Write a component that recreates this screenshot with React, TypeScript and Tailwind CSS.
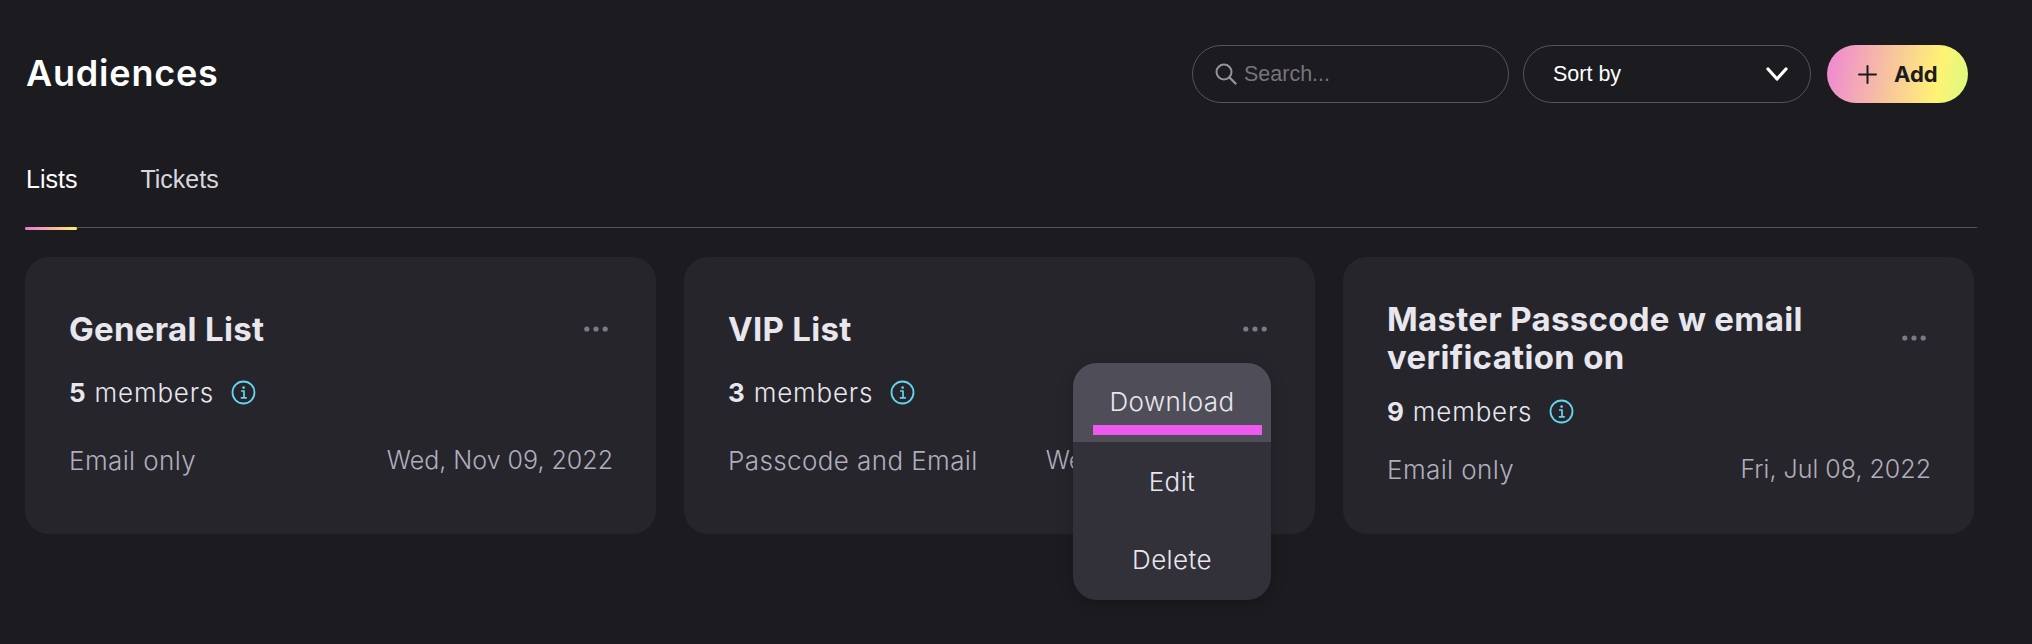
import React from "react";

const poppins = "font-['Inter','Liberation_Sans',sans-serif]";

function Dots() {
  return (
    <svg width="24" height="6" viewBox="0 0 24 6" className="shrink-0" fill="#7b7a85">
      <circle cx="2.8" cy="3" r="2.6" />
      <circle cx="12" cy="3" r="2.6" />
      <circle cx="21.2" cy="3" r="2.6" />
    </svg>
  );
}

function Info() {
  return (
    <svg width="25" height="25" viewBox="0 0 25 25" fill="none" stroke="#63d5ee" className="shrink-0">
      <circle cx="12.5" cy="12.5" r="11" strokeWidth="1.8" />
      <path d="M10 11h3v6.5M9.8 17.8h6" strokeWidth="1.7" />
      <circle cx="12.6" cy="7.6" r="1.3" fill="#63d5ee" stroke="none" />
    </svg>
  );
}

function Card({
  title,
  count,
  kind,
  date,
  menu,
}: {
  title: React.ReactNode;
  count: number;
  kind: string;
  date: string;
  menu?: boolean;
}) {
  return (
    <div className="relative h-[277px] rounded-[24px] bg-[#27252c] pl-[44px] pr-[43px] py-[26px] flex flex-col justify-evenly">
      <div className="flex items-center justify-between pr-[5px]">
        <h2 className={`${poppins} text-[33px] leading-[38px] font-bold tracking-[0.3px] text-[#e8e7ee] w-[460px]`}>{title}</h2>
        <Dots />
      </div>
      <div className={`${poppins} h-[40px] pb-[5px] flex items-center gap-[17px] text-[26px] tracking-[0.8px] font-light text-[#e8e7ee]`}>
        <span>
          <span className="font-bold">{count}</span> members
        </span>
        <Info />
      </div>
      <div className={`${poppins} h-[40px] pb-[2px] flex items-center justify-between font-light text-[#b0aebd]`}>
        <span className="text-[26px] tracking-[0.4px]">{kind}</span>
        <span className="text-[25px]">{date}</span>
      </div>
      {menu && (
        <div className={`${poppins} absolute left-[389px] top-[106px] w-[198px] h-[237px] rounded-[24px] bg-[#32313a] overflow-hidden flex flex-col text-[26px] tracking-[0.4px] font-light text-[#e8e7ee] shadow-[0_4px_16px_rgba(0,0,0,0.2)]`}>
          <div className="h-[79px] bg-[#4f4e58] flex flex-col items-center pt-[19px] relative">
            <span className="leading-[40px]">Download</span>
            <span className="absolute left-[20px] top-[62px] w-[169px] h-[10px] bg-[#ee5af0]" />
          </div>
          <div className="h-[78px] flex items-center justify-center">Edit</div>
          <div className="h-[78px] flex items-center justify-center">Delete</div>
        </div>
      )}
    </div>
  );
}

export default function App() {
  return (
    <div className="w-[2032px] h-[644px] overflow-hidden bg-[#1c1b20] pl-[25px] pt-[45px]">
      <div className="w-[1952px]">
        <header className="flex items-center justify-between h-[58px] pr-[9px]">
          <h1 className={`${poppins} text-[36px] font-semibold tracking-[0.8px] text-white pl-[1px] pb-[2px]`}>Audiences</h1>
          <div className="flex items-center">
            <label className="w-[317px] h-[58px] rounded-full border border-[#55545e] flex items-center pl-[22px] gap-[7px]">
              <svg width="22" height="22" viewBox="0 0 22 22" fill="none" stroke="#94939c" strokeWidth="2">
                <circle cx="9" cy="9" r="7.5" />
                <path d="M14.5 14.5l6 6" strokeLinecap="round" strokeWidth="2.4" />
              </svg>
              <input
                placeholder="Search..."
                className="w-[240px] bg-transparent outline-none font-['Liberation_Sans',sans-serif] text-[21.5px] placeholder:text-[#76757c]"
              />
            </label>
            <div className="ml-[14px] w-[288px] h-[58px] rounded-full border border-[#55545e] flex items-center justify-between pl-[29px] pr-[22px] font-['Liberation_Sans',sans-serif] text-[21.5px] text-white">
              <span>Sort by</span>
              <svg width="22" height="14" viewBox="0 0 22 14" fill="none" stroke="#fff" strokeWidth="3.2" strokeLinecap="round" strokeLinejoin="round">
                <path d="M2 2l9 10 9-10" />
              </svg>
            </div>
            <button className="ml-[16px] w-[141px] h-[58px] rounded-full bg-[linear-gradient(100deg,#ee86d5_0%,#fff374_78%,#d8fb80_100%)] flex items-center pl-[31px] gap-[17px]">
              <svg width="19" height="19" viewBox="0 0 19 19" stroke="#1c1b20" strokeWidth="2" strokeLinecap="round">
                <path d="M9.5 1v17M1 9.5h17" />
              </svg>
              <span className={`${poppins} text-[22px] font-bold text-[#1c1b20]`}>Add</span>
            </button>
          </div>
        </header>
        <nav className="mt-[32px] h-[93px] border-b border-[#55545e] flex items-start gap-[63px] pt-[24px] font-['Liberation_Sans',sans-serif] text-[25px] leading-[40px] pl-[1px]">
          <span className="relative text-white">
            Lists
            <span className="absolute -left-[1px] right-0 top-[68px] h-[3px] rounded-full bg-[linear-gradient(90deg,#ee75d8,#fff06e)]" />
          </span>
          <span className="text-[#d8d7de]">Tickets</span>
        </nav>
        <div className="mt-[29px] grid grid-cols-3 gap-[28px] pr-[3px]">
          <Card title="General List" count={5} kind="Email only" date="Wed, Nov 09, 2022" />
          <Card title="VIP List" count={3} kind="Passcode and Email" date="Wed, Nov 09, 2022" menu />
          <Card title={<>Master Passcode w email<br />verification on</>} count={9} kind="Email only" date="Fri, Jul 08, 2022" />
        </div>
      </div>
    </div>
  );
}
